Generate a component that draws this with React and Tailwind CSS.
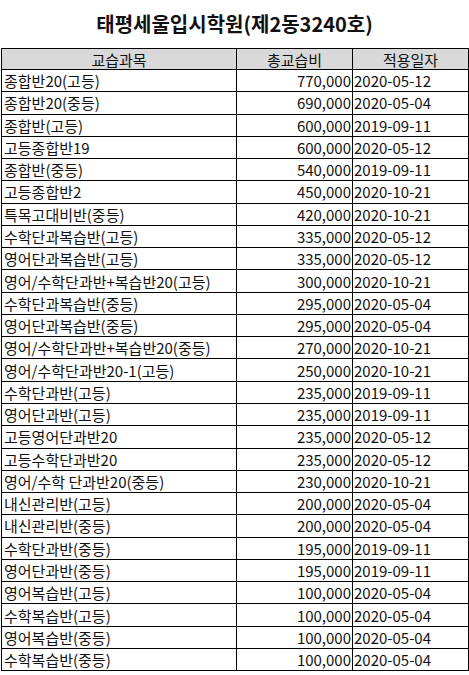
const rows = [
  ['종합반20(고등)', '770,000', '2020-05-12'],
  ['종합반20(중등)', '690,000', '2020-05-04'],
  ['종합반(고등)', '600,000', '2019-09-11'],
  ['고등종합반19', '600,000', '2020-05-12'],
  ['종합반(중등)', '540,000', '2019-09-11'],
  ['고등종합반2', '450,000', '2020-10-21'],
  ['특목고대비반(중등)', '420,000', '2020-10-21'],
  ['수학단과복습반(고등)', '335,000', '2020-05-12'],
  ['영어단과복습반(고등)', '335,000', '2020-05-12'],
  ['영어/수학단과반+복습반20(고등)', '300,000', '2020-10-21'],
  ['수학단과복습반(중등)', '295,000', '2020-05-04'],
  ['영어단과복습반(중등)', '295,000', '2020-05-04'],
  ['영어/수학단과반+복습반20(중등)', '270,000', '2020-10-21'],
  ['영어/수학단과반20-1(고등)', '250,000', '2020-10-21'],
  ['수학단과반(고등)', '235,000', '2019-09-11'],
  ['영어단과반(고등)', '235,000', '2019-09-11'],
  ['고등영어단과반20', '235,000', '2020-05-12'],
  ['고등수학단과반20', '235,000', '2020-05-12'],
  ['영어/수학 단과반20(중등)', '230,000', '2020-10-21'],
  ['내신관리반(고등)', '200,000', '2020-05-04'],
  ['내신관리반(중등)', '200,000', '2020-05-04'],
  ['수학단과반(중등)', '195,000', '2019-09-11'],
  ['영어단과반(중등)', '195,000', '2019-09-11'],
  ['영어복습반(고등)', '100,000', '2020-05-04'],
  ['수학복습반(고등)', '100,000', '2020-05-04'],
  ['영어복습반(중등)', '100,000', '2020-05-04'],
  ['수학복습반(중등)', '100,000', '2020-05-04'],
];

export default function App() {
  return (
    <div
      className="w-[469px] h-[675px] bg-white text-[#111] overflow-hidden"
      style={{ fontFamily: "'Noto Sans CJK KR', 'Noto Sans', sans-serif" }}
    >
      <h1 className="h-[48px] flex items-center justify-center text-[20px] font-bold pb-[1px]">
        태평세울입시학원(제2동3240호)
      </h1>
      <table className="ml-[1px] w-[467px] table-fixed border-collapse text-[15px] leading-none">
        <colgroup>
          <col className="w-[235px]" />
          <col className="w-[116px]" />
          <col className="w-[116px]" />
        </colgroup>
        <thead>
          <tr className="h-[21px] bg-[#d9d9d9]">
            <th className="border border-black font-normal text-center">교습과목</th>
            <th className="border border-black font-normal text-center">총교습비</th>
            <th className="border border-black font-normal text-center">적용일자</th>
          </tr>
        </thead>
        <tbody>
          {rows.map(([name, fee, date], i) => (
            <tr key={i} className="h-[22.27px]">
              <td className="border border-black pl-[2px] whitespace-nowrap">{name}</td>
              <td className="border border-black pr-[1px] text-right">{fee}</td>
              <td className="border border-black pl-[1px]">{date}</td>
            </tr>
          ))}
        </tbody>
      </table>
    </div>
  );
}
